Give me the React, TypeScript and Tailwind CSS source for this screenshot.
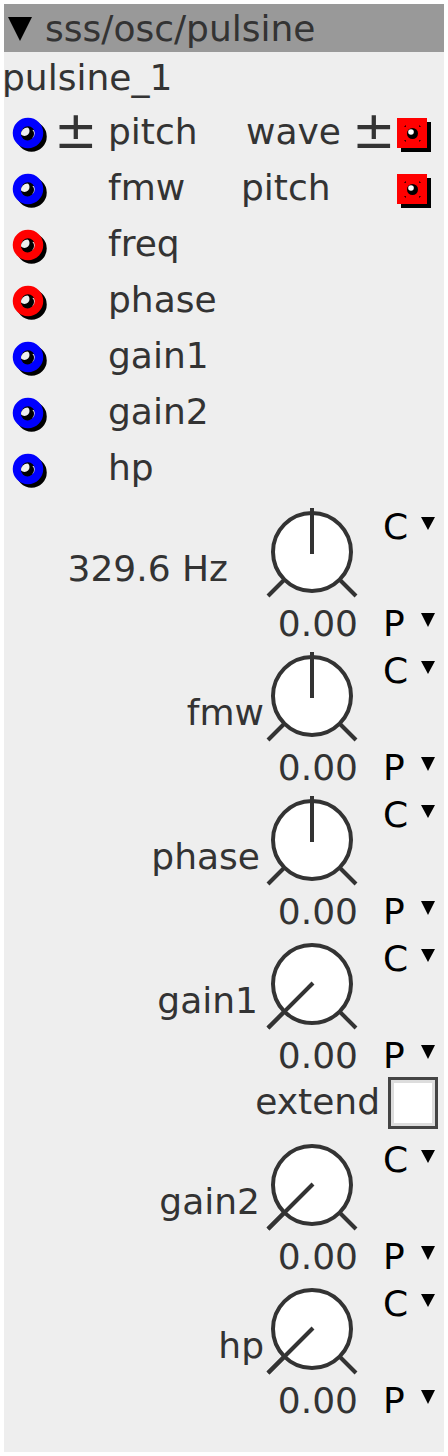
import React from 'react';

const ink = 'text-[#333333]';

function Tri({ className = '', w = 14, h = 13 }: { className?: string; w?: number; h?: number }) {
  return (
    <svg width={w} height={h} viewBox={`0 0 ${w} ${h}`} className={`block shrink-0 ${className}`}>
      <polygon points={`0,0 ${w},0 ${w / 2},${h}`} fill="#000" />
    </svg>
  );
}

function Inlet({ color, id }: { color: string; id: string }) {
  return (
    <svg width="48" height="56" viewBox="0 0 48 56" className="block shrink-0">
      <defs>
        <clipPath id={id}>
          <circle cx="23.5" cy="30" r="6.5" />
        </clipPath>
      </defs>
      <circle cx="27.5" cy="32.5" r="11" fill="none" stroke="#000" strokeWidth="8.5" />
      <circle cx="24" cy="29" r="11" fill="none" stroke={color} strokeWidth="8.5" />
      <circle cx="23.5" cy="30" r="6.5" fill="#000" />
      <circle cx="20.5" cy="27" r="5" fill="#eeeeee" clipPath={`url(#${id})`} />
    </svg>
  );
}

function Outlet() {
  return (
    <svg width="51" height="56" viewBox="0 0 51 56" className="block shrink-0">
      <rect x="8" y="18" width="30" height="30" fill="#000" />
      <rect x="4" y="14" width="30" height="30" fill="#ff0000" />
      <rect x="12" y="22" width="15" height="15" fill="none" stroke="#000" strokeWidth="1" strokeDasharray="2 13" strokeDashoffset="1" />
      <circle cx="19.5" cy="29.5" r="5.5" fill="#000" />
      <circle cx="18" cy="28" r="2.8" fill="#fff" />
    </svg>
  );
}

type Row = { inlet: string; pm?: boolean; label: string; right?: 'wave' | 'pitch' };

const rows: Row[] = [
  { inlet: '#0000ff', pm: true, label: 'pitch', right: 'wave' },
  { inlet: '#0000ff', label: 'fmw', right: 'pitch' },
  { inlet: '#ff0000', label: 'freq' },
  { inlet: '#ff0000', label: 'phase' },
  { inlet: '#0000ff', label: 'gain1' },
  { inlet: '#0000ff', label: 'gain2' },
  { inlet: '#0000ff', label: 'hp' },
];

function PortRow({ row }: { row: Row }) {
  return (
    <div className="flex h-[56px] items-center">
      <Inlet color={row.inlet} id={`clip-${row.label}`} />
      <div className="w-[56px] shrink-0 pl-[2px]">
        {row.pm && <span className="block text-[52px] leading-none -mt-[4px]">±</span>}
      </div>
      <div className="w-[138px] shrink-0">{row.label}</div>
      {row.right === 'wave' && (
        <>
          <div className="w-[104px] shrink-0">wave</div>
          <div className="-mt-[4px] w-[43px] shrink-0 pl-[2px] text-[52px] leading-none">±</div>
          <Outlet />
        </>
      )}
      {row.right === 'pitch' && (
        <>
          <div className="-ml-[5px] w-[152px] shrink-0">pitch</div>
          <Outlet />
        </>
      )}
    </div>
  );
}

function KnobSvg({ min }: { min?: boolean }) {
  return (
    <svg width="96" height="104" viewBox="0 0 96 104" className="block">
      <circle cx="48" cy="56" r="39" fill="#fff" stroke="#333" strokeWidth="4" />
      <line x1="20.5" y1="83.5" x2="4" y2="100" stroke="#333" strokeWidth="4" />
      <line x1="75.5" y1="83.5" x2="92" y2="100" stroke="#333" strokeWidth="4" />
      {min ? (
        <line x1="49" y1="55" x2="4" y2="100" stroke="#333" strokeWidth="4" />
      ) : (
        <line x1="48" y1="58" x2="48" y2="12" stroke="#333" strokeWidth="4" />
      )}
    </svg>
  );
}

function Knob({ label, labelClass, min }: { label: string; labelClass: string; min?: boolean }) {
  return (
    <div className="grid grid-cols-[1fr_96px_84px] grid-rows-[104px_40px]">
      <div className={`flex items-start justify-end pt-[55px] leading-none ${labelClass}`}>{label}</div>
      <KnobSvg min={min} />
      <div className="flex items-start pl-[23px] pt-[13px] leading-none text-black">
        <span className="w-[38px]">C</span>
        <Tri className="mt-[8px]" />
      </div>
      <div />
      <div className="flex justify-end pr-[2px] pt-[6px] leading-none">0.00</div>
      <div className="flex items-start pl-[23px] pt-[6px] leading-none text-black">
        <span className="w-[38px]">P</span>
        <Tri className="mt-[7px]" h={14} />
      </div>
    </div>
  );
}

export default function App() {
  return (
    <div className="min-h-[1456px] bg-white pt-[4px] pl-[4px] font-['DejaVu_Sans',sans-serif]">
      <div className={`flex h-[1448px] w-[440px] flex-col bg-[#eeeeee] text-[36px] ${ink}`}>
        <div className="flex h-[48px] shrink-0 items-center bg-[#999999] leading-[48px]">
          <Tri className="ml-[4px] mr-[13px] mt-[2px]" w={24} h={24} />
          <span className="mt-[1px]">sss/osc/pulsine</span>
        </div>
        <div className="-ml-[2px] h-[52px] shrink-0 leading-[52px]">pulsine_1</div>
        {rows.map((r) => (
          <PortRow key={r.label} row={r} />
        ))}
        <Knob label="329.6 Hz" labelClass="pr-[36px]" />
        <Knob label="fmw" labelClass="pr-[0px]" />
        <Knob label="phase" labelClass="pr-[4px]" />
        <Knob label="gain1" labelClass="pr-[6px]" min />
        <div className="flex h-[57px] shrink-0 items-start justify-end">
          <span className="mt-[12px] leading-none">extend</span>
          <div className="ml-[8px] mr-[6px] mt-[5px] h-[52px] w-[50px] border-[3px] border-[#444444] bg-white shadow-[inset_0_0_0_3px_#dddddd]" />
        </div>
        <Knob label="gain2" labelClass="pr-[4px]" min />
        <Knob label="hp" labelClass="pr-[0px]" min />
      </div>
    </div>
  );
}
